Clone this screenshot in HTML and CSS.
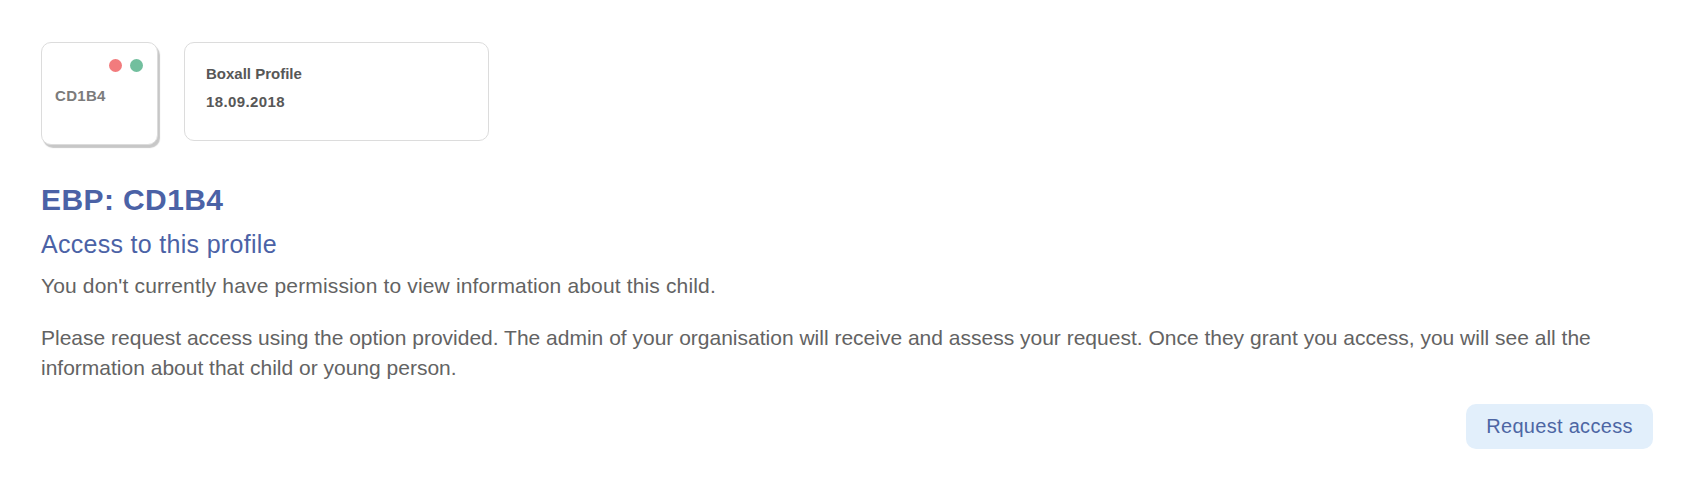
FILE: index.html
```html
<!DOCTYPE html>
<html lang="en">
<head>
<meta charset="utf-8">
<title>EBP: CD1B4</title>
<link rel="stylesheet" href="styles.css">
</head>
<body>
<main class="page">
  <section class="cards">
    <div class="card card-code">
      <div class="dots">
        <span class="dot dot-red"></span>
        <span class="dot dot-green"></span>
      </div>
      <div class="code">CD1B4</div>
    </div>
    <div class="card card-profile">
      <div class="profile-name">Boxall Profile</div>
      <div class="profile-date">18.09.2018</div>
    </div>
  </section>
  <h1 class="title">EBP: CD1B4</h1>
  <h2 class="subtitle">Access to this profile</h2>
  <p class="text text-first">You don't currently have permission to view information about this child.</p>
  <p class="text text-second">Please request access using the option provided. The admin of your organisation will receive and assess your request. Once they grant you access, you will see all the information about that child or young person.</p>
  <div class="actions">
    <button class="btn-request" type="button">Request access</button>
  </div>
</main>
</body>
</html>
```

FILE: styles.css
```css
* { box-sizing: border-box; }

html, body {
  margin: 0;
  padding: 0;
  background: #ffffff;
}

body {
  font-family: "Liberation Sans", Arial, Helvetica, sans-serif;
  color: #636363;
}

.page {
  padding: 42px 46px 0 41px;
}

.cards {
  display: flex;
  align-items: flex-start;
  gap: 26px;
}

.card {
  background: #ffffff;
  border: 1px solid #dcdcdc;
  border-radius: 10px;
}

.card-code {
  width: 117px;
  height: 103px;
  padding: 16px 14px 0 13px;
  box-shadow: 2px 3px 1px rgba(0, 0, 0, 0.22);
}

.dots {
  display: flex;
  justify-content: flex-end;
  gap: 8px;
}

.dot {
  width: 13px;
  height: 13px;
  border-radius: 50%;
}

.dot-red { background: #f27b7d; }
.dot-green { background: #72bf9e; }

.code {
  margin-top: 15px;
  font-size: 15px;
  line-height: 18px;
  font-weight: 700;
  letter-spacing: 0.3px;
  color: #7b7b7b;
}

.card-profile {
  width: 305px;
  height: 99px;
  padding: 17px 0 0 21px;
}

.profile-name,
.profile-date {
  font-size: 15px;
  line-height: 28px;
  font-weight: 700;
  color: #575757;
}

.profile-date {
  letter-spacing: 0.4px;
}

.title {
  margin: 37px 0 0 0;
  font-size: 30px;
  line-height: 36px;
  font-weight: 700;
  letter-spacing: 0.4px;
  color: #4b62a6;
}

.subtitle {
  margin: 11px 0 0 0;
  font-size: 25px;
  line-height: 30px;
  font-weight: 400;
  letter-spacing: 0.3px;
  color: #4b62a6;
}

.text {
  margin: 0;
  font-size: 21px;
  line-height: 30px;
  color: #636363;
}

.text-first { margin-top: 12px; letter-spacing: 0.15px; }
.text-second { margin-top: 22px; }

.actions {
  display: flex;
  justify-content: flex-end;
  margin-top: 21px;
}

.btn-request {
  width: 187px;
  height: 45px;
  border: none;
  border-radius: 10px;
  background: #e2effb;
  color: #4d66a4;
  font-family: "Liberation Sans", Arial, Helvetica, sans-serif;
  font-size: 20px;
  letter-spacing: 0.3px;
  padding: 0;
  cursor: pointer;
}
```
